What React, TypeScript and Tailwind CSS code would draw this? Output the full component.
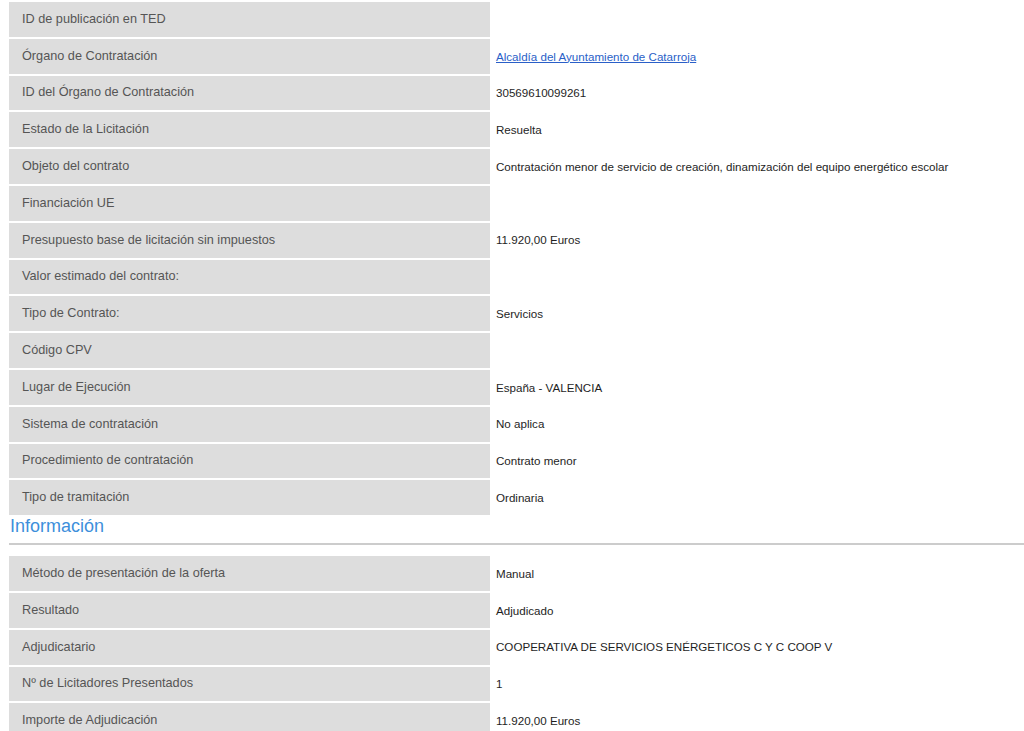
import React from "react";

type Row = { label: string; value?: string; link?: boolean };

const rows1: Row[] = [
  { label: "ID de publicación en TED" },
  { label: "Órgano de Contratación", value: "Alcaldía del Ayuntamiento de Catarroja", link: true },
  { label: "ID del Órgano de Contratación", value: "30569610099261" },
  { label: "Estado de la Licitación", value: "Resuelta" },
  { label: "Objeto del contrato", value: "Contratación menor de servicio de creación, dinamización del equipo energético escolar" },
  { label: "Financiación UE" },
  { label: "Presupuesto base de licitación sin impuestos", value: "11.920,00 Euros" },
  { label: "Valor estimado del contrato:" },
  { label: "Tipo de Contrato:", value: "Servicios" },
  { label: "Código CPV" },
  { label: "Lugar de Ejecución", value: "España - VALENCIA" },
  { label: "Sistema de contratación", value: "No aplica" },
  { label: "Procedimiento de contratación", value: "Contrato menor" },
  { label: "Tipo de tramitación", value: "Ordinaria" },
];

const rows2: Row[] = [
  { label: "Método de presentación de la oferta", value: "Manual" },
  { label: "Resultado", value: "Adjudicado" },
  { label: "Adjudicatario", value: "COOPERATIVA DE SERVICIOS ENÉRGETICOS C Y C COOP V" },
  { label: "Nº de Licitadores Presentados", value: "1" },
  { label: "Importe de Adjudicación", value: "11.920,00 Euros" },
];

function Rows({ rows }: { rows: Row[] }) {
  return (
    <div className="flex flex-col gap-[2px]">
      {rows.map((r, i) => (
        <div key={i} className="flex h-[34.8px] gap-[6px]">
          <div className="w-[481px] shrink-0 bg-[#dddddd] flex items-center pl-[13px] text-[12.7px] text-[#555555]">
            {r.label}
          </div>
          <div className="flex items-center text-[11.6px] text-[#1e1e1e]">
            {r.link ? (
              <a href="#" className="text-[#2a5fc8] underline">
                {r.value}
              </a>
            ) : (
              r.value
            )}
          </div>
        </div>
      ))}
    </div>
  );
}

export default function App() {
  return (
    <div
      className="w-[1024px] h-[731px] overflow-hidden bg-white pl-[9px] pt-[2px]"
      style={{ fontFamily: '"Liberation Sans", Arial, sans-serif' }}
    >
      <Rows rows={rows1} />
      <div className="pl-[1px] text-[18px] leading-[22px] text-[#3d8fdb]">Información</div>
      <div className="h-[2px] bg-[#cccccc] mt-[6px] mb-[11px]" />
      <Rows rows={rows2} />
    </div>
  );
}
